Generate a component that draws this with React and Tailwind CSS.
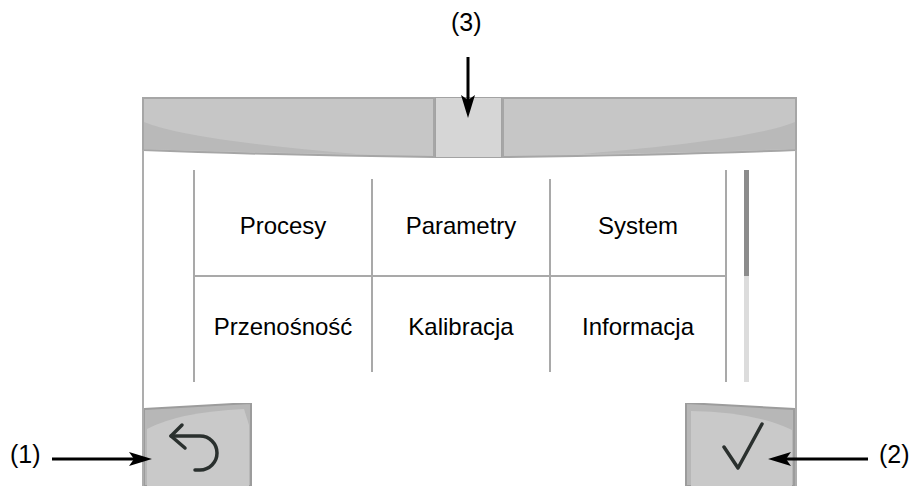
export default function App() {
  const line = 'bg-[#a9a9a9]';

  return (
    <div className="relative w-[912px] h-[486px] overflow-hidden bg-white pt-[97px] pl-[142px] font-['Liberation_Sans',Arial,sans-serif] text-black">
      {/* Device screen */}
      <div className="w-[655px] flex flex-col">
        {/* Top bar */}
        <div className="flex h-[61px]">
          <svg width="293" height="61" viewBox="0 0 293 61" className="block">
            <path d="M1 1 H292 V60 Q130 58 1 53 Z" fill="#c6c6c6" stroke="#a6a6a6" strokeWidth="2" />
            <path d="M2 25 Q45 43 215 57 Q120 56 2 52 Z" fill="#b9b9b9" />
            <line x1="1" y1="53" x2="1" y2="61" stroke="#adadad" strokeWidth="2" />
          </svg>
          <div className="w-[67px] h-[61px] bg-[#d6d6d6] border border-[#a3a3a3]" />
          <svg width="295" height="61" viewBox="0 0 295 61" className="block flex-1">
            <path d="M1 1 H294 V53 Q165 58 1 60 Z" fill="#c6c6c6" stroke="#a6a6a6" strokeWidth="2" />
            <path d="M293 25 Q250 43 80 57 Q175 56 293 52 Z" fill="#b9b9b9" />
            <line x1="294" y1="53" x2="294" y2="61" stroke="#adadad" strokeWidth="2" />
          </svg>
        </div>

        {/* Body */}
        <div className="h-[330px] border-x-2 border-[#adadad] flex flex-col pt-[12px]">
          <div className="flex pl-[49px]">
            {/* Menu grid */}
            <div className="w-[534px] h-[212px] border-x-2 border-[#a9a9a9] flex flex-col text-[24px]">
              <div className="flex h-[105px]">
                <div className="w-[176px] flex items-center justify-center pt-[6px]">Procesy</div>
                <div className={`w-[2px] mt-[9px] ${line}`} />
                <div className="w-[176px] flex items-center justify-center pt-[6px]">Parametry</div>
                <div className={`w-[2px] mt-[9px] ${line}`} />
                <div className="flex-1 flex items-center justify-center pt-[6px]">System</div>
              </div>
              <div className={`h-[2px] ${line}`} />
              <div className="flex h-[105px]">
                <div className="w-[176px] flex items-center justify-center pb-[6px]">Przenośność</div>
                <div className={`w-[2px] mb-[10px] ${line}`} />
                <div className="w-[176px] flex items-center justify-center pb-[6px]">Kalibracja</div>
                <div className={`w-[2px] mb-[10px] ${line}`} />
                <div className="flex-1 flex items-center justify-center pb-[6px]">Informacja</div>
              </div>
            </div>

            {/* Scrollbar */}
            <div className="ml-[17px] w-[5px] h-[212px] flex flex-col">
              <div className="h-[106px] bg-[#8c8c8c]" />
              <div className="flex-1 bg-[#dcdcdc]" />
            </div>
          </div>

          {/* Bottom buttons */}
          <div className="mt-[21px] flex justify-between">
            <svg width="108" height="83" viewBox="0 0 108 83" className="block">
              <path d="M0 6 L107 0 V83 H0 Z" fill="#b7b7b7" stroke="#9c9c9c" strokeWidth="2" />
              <path d="M3 83 V26 Q35 9 100 6 L105 22 V83 Z" fill="#c9c9c9" />
              <g fill="none" stroke="#2a302e" strokeWidth="3.5" strokeLinecap="round" strokeLinejoin="round">
                <path d="M38 22 L27 33 L41 45" />
                <path d="M27 33 H56 A17 17 0 0 1 56 67 H51" />
              </g>
            </svg>
            <svg width="110" height="83" viewBox="0 0 110 83" className="block">
              <path d="M1 0 L109 6 V83 H1 Z" fill="#b7b7b7" stroke="#9c9c9c" strokeWidth="2" />
              <path d="M6 83 V8 Q70 9 107 27 V83 Z" fill="#c9c9c9" />
              <path d="M39 44 L53 65 L77 21" fill="none" stroke="#2a302e" strokeWidth="3.5" strokeLinecap="round" strokeLinejoin="round" />
            </svg>
          </div>
        </div>
      </div>

      {/* Callouts */}
      <div className="absolute left-[451px] top-[10px] text-[25px] leading-none">(3)</div>
      <div className="absolute left-[10px] top-[442px] text-[25px] leading-none">(1)</div>
      <div className="absolute left-[879px] top-[442px] text-[25px] leading-none">(2)</div>

      <svg className="absolute inset-0 pointer-events-none" width="912" height="486" viewBox="0 0 912 486">
        <g stroke="#000" strokeWidth="3">
          <line x1="468" y1="57" x2="468" y2="102" />
          <line x1="52" y1="459" x2="136" y2="459" />
          <line x1="868" y1="459" x2="784" y2="459" />
        </g>
        <g fill="#000">
          <path d="M468 118 L461 95 L468 100 L475 95 Z" />
          <path d="M152 459 L129 452 L134 459 L129 466 Z" />
          <path d="M768 459 L791 452 L786 459 L791 466 Z" />
        </g>
      </svg>
    </div>
  );
}
